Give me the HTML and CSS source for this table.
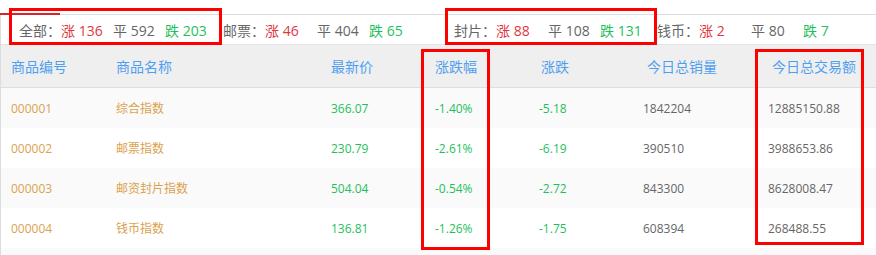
FILE: index.html
```html
<!DOCTYPE html>
<html lang="zh-CN">
<head>
<meta charset="utf-8">
<title>指数行情</title>
<link rel="stylesheet" href="styles.css">
</head>
<body>
<div class="page">
  <div class="tabbar"><div class="tab-active"></div></div>
  <div class="panel">
    <div class="stats">
      <div class="group">
        <span class="label">全部：</span>
        <span class="item up">涨 136</span>
        <span class="item flat">平 592</span>
        <span class="item down">跌 203</span>
      </div>
      <div class="group">
        <span class="label">邮票：</span>
        <span class="item up">涨 46</span>
        <span class="item flat">平 404</span>
        <span class="item down">跌 65</span>
      </div>
      <div class="group group-right">
        <span class="label">封片：</span>
        <span class="item up">涨 88</span>
        <span class="item flat">平 108</span>
        <span class="item down">跌 131</span>
      </div>
      <div class="group">
        <span class="label">钱币：</span>
        <span class="item up">涨 2</span>
        <span class="item flat">平 80</span>
        <span class="item down">跌 7</span>
      </div>
    </div>
    <div class="table">
      <div class="row head">
        <div class="cell">商品编号</div>
        <div class="cell">商品名称</div>
        <div class="cell">最新价</div>
        <div class="cell">涨跌幅</div>
        <div class="cell shift2">涨跌</div>
        <div class="cell shift4">今日总销量</div>
        <div class="cell shift4">今日总交易额</div>
      </div>
      <div class="row stripe">
        <div class="cell gold">000001</div>
        <div class="cell gold">综合指数</div>
        <div class="cell green">366.07</div>
        <div class="cell green">-1.40%</div>
        <div class="cell green">-5.18</div>
        <div class="cell gray">1842204</div>
        <div class="cell gray">12885150.88</div>
      </div>
      <div class="row">
        <div class="cell gold">000002</div>
        <div class="cell gold">邮票指数</div>
        <div class="cell green">230.79</div>
        <div class="cell green">-2.61%</div>
        <div class="cell green">-6.19</div>
        <div class="cell gray">390510</div>
        <div class="cell gray">3988653.86</div>
      </div>
      <div class="row stripe">
        <div class="cell gold">000003</div>
        <div class="cell gold">邮资封片指数</div>
        <div class="cell green">504.04</div>
        <div class="cell green">-0.54%</div>
        <div class="cell green">-2.72</div>
        <div class="cell gray">843300</div>
        <div class="cell gray">8628008.47</div>
      </div>
      <div class="row">
        <div class="cell gold">000004</div>
        <div class="cell gold">钱币指数</div>
        <div class="cell green">136.81</div>
        <div class="cell green">-1.26%</div>
        <div class="cell green">-1.75</div>
        <div class="cell gray">608394</div>
        <div class="cell gray">268488.55</div>
      </div>
      <div class="row stripe"></div>
    </div>
  </div>
  <div class="mark mark-all"></div>
  <div class="mark mark-cover"></div>
  <div class="mark mark-change"></div>
  <div class="mark mark-amount"></div>
</div>
</body>
</html>
```

FILE: styles.css
```css
* { box-sizing: border-box; }
html, body { margin: 0; padding: 0; background: #fff; }
body {
  font-family: "Open Sans", "Noto Sans CJK SC", sans-serif;
  color: #666;
  overflow: hidden;
}
.page { position: relative; width: 876px; height: 255px; overflow: hidden; }

.tabbar {
  height: 15px;
  border-bottom: 1px solid #dcdcdc;
  display: flex;
  align-items: flex-end;
}
.tab-active {
  width: 60px;
  height: 2px;
  background: #d9232d;
  margin-bottom: -1px;
}

.panel { border-left: 1px solid #dcdcdc; }

.stats {
  height: 30px;
  display: flex;
  align-items: center;
  padding-left: 18px;
  font-size: 14px;
  border-bottom: 1px solid #e3e3e3;
  white-space: nowrap;
}
.group { display: flex; width: 204px; }
.group-right { margin-left: 27px; width: 203px; }
.label { width: 42px; color: #666; }
.item { width: 52px; }
.up { color: #e2363f; }
.flat { color: #666; }
.down { color: #1fbf5c; }

.table { font-size: 12px; }
.row {
  display: grid;
  grid-template-columns: 105px 215px 104px 104px 104px 125px 1fr;
  padding-left: 10px;
  height: 40px;
  align-items: center;
  background: #fff;
}
.row.stripe { background: #fafafa; }
.row.head {
  height: 43px;
  background: #efefef;
  border-bottom: 1px solid #dedede;
  font-size: 14px;
  color: #4f9ff0;
}
.cell { white-space: nowrap; }
.head .shift2 { padding-left: 2px; }
.head .shift4 { padding-left: 4px; }
.gold { color: #dba24f; }
.green { color: #1fbf5c; }
.gray { color: #666; }

.mark {
  position: absolute;
  border: 3px solid #f00;
}
.mark-all { left: 9px; top: 8px; width: 213px; height: 37px; }
.mark-cover { left: 445px; top: 8px; width: 212px; height: 37px; }
.mark-change { left: 421px; top: 49px; width: 69px; height: 201px; }
.mark-amount { left: 755px; top: 49px; width: 109px; height: 196px; }
```
